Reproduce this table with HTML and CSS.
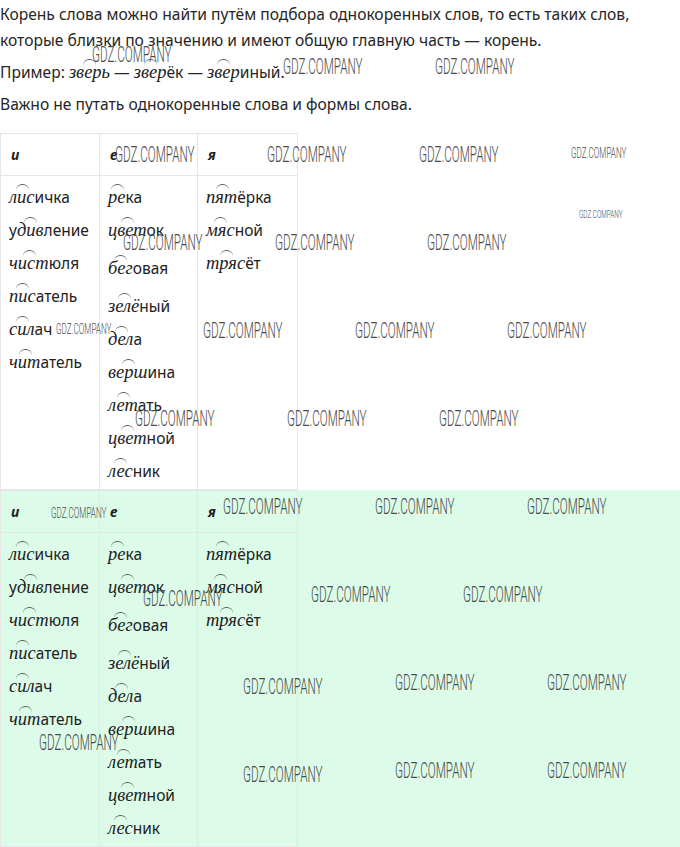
FILE: index.html
```html
<!DOCTYPE html>
<html lang="ru">
<head>
<meta charset="utf-8">
<link rel="stylesheet" href="styles.css">
</head>
<body>
<div class="page">
  <p class="intro">Корень слова можно найти путём подбора однокоренных слов, то есть таких слов,<br>которые близки по значению и имеют общую главную часть — корень.</p>
  <p class="example">Пример: <span class="r it">зверь</span> — <span class="r">звер</span>ёк — <span class="r">звер</span>иный.</p>
  <p class="note">Важно не путать однокоренные слова и формы слова.</p>

  <section class="block">
    <table class="roots">
      <tr class="head"><th>и</th><th>е</th><th>я</th></tr>
      <tr>
        <td>
          <div class="w"><span class="r">лис</span>ичка</div>
          <div class="w">у<span class="r">див</span>ление</div>
          <div class="w"><span class="r">чист</span>юля</div>
          <div class="w"><span class="r">пис</span>атель</div>
          <div class="w"><span class="r">сил</span>ач</div>
          <div class="w"><span class="r">чит</span>атель</div>
        </td>
        <td>
          <div class="w"><span class="r">ре</span>ка</div>
          <div class="w"><span class="r">цвет</span>ок</div>
          <div class="w tall"><span class="r">бег</span>овая</div>
          <div class="w tall"><span class="r">зелё</span>ный</div>
          <div class="w"><span class="r">дел</span>а</div>
          <div class="w"><span class="r">верш</span>ина</div>
          <div class="w"><span class="r">лет</span>ать</div>
          <div class="w"><span class="r">цвет</span>ной</div>
          <div class="w"><span class="r">лес</span>ник</div>
        </td>
        <td>
          <div class="w"><span class="r">пят</span>ёрка</div>
          <div class="w"><span class="r">мяс</span>ной</div>
          <div class="w"><span class="r">тряс</span>ёт</div>
        </td>
      </tr>
    </table>
  </section>

  <section class="block green">
    <table class="roots">
      <tr class="head"><th>и</th><th>е</th><th>я</th></tr>
      <tr>
        <td>
          <div class="w"><span class="r">лис</span>ичка</div>
          <div class="w">у<span class="r">див</span>ление</div>
          <div class="w"><span class="r">чист</span>юля</div>
          <div class="w"><span class="r">пис</span>атель</div>
          <div class="w"><span class="r">сил</span>ач</div>
          <div class="w"><span class="r">чит</span>атель</div>
        </td>
        <td>
          <div class="w"><span class="r">ре</span>ка</div>
          <div class="w"><span class="r">цвет</span>ок</div>
          <div class="w tall"><span class="r">бег</span>овая</div>
          <div class="w tall"><span class="r">зелё</span>ный</div>
          <div class="w"><span class="r">дел</span>а</div>
          <div class="w"><span class="r">верш</span>ина</div>
          <div class="w"><span class="r">лет</span>ать</div>
          <div class="w"><span class="r">цвет</span>ной</div>
          <div class="w"><span class="r">лес</span>ник</div>
        </td>
        <td>
          <div class="w"><span class="r">пят</span>ёрка</div>
          <div class="w"><span class="r">мяс</span>ной</div>
          <div class="w"><span class="r">тряс</span>ёт</div>
        </td>
      </tr>
    </table>
  </section>

  <div class="marks">
    <span class="wm" style="left:92px;top:44px">GDZ.COMPANY</span>
    <span class="wm" style="left:283px;top:56px">GDZ.COMPANY</span>
    <span class="wm" style="left:435px;top:56px">GDZ.COMPANY</span>
    <span class="wm" style="left:115px;top:144px">GDZ.COMPANY</span>
    <span class="wm" style="left:267px;top:144px">GDZ.COMPANY</span>
    <span class="wm" style="left:419px;top:144px">GDZ.COMPANY</span>
    <span class="wm sm" style="left:571px;top:146px">GDZ.COMPANY</span>
    <span class="wm xs" style="left:579px;top:209px">GDZ.COMPANY</span>
    <span class="wm" style="left:123px;top:232px">GDZ.COMPANY</span>
    <span class="wm" style="left:275px;top:232px">GDZ.COMPANY</span>
    <span class="wm" style="left:427px;top:232px">GDZ.COMPANY</span>
    <span class="wm sm" style="left:56px;top:322px">GDZ.COMPANY</span>
    <span class="wm" style="left:203px;top:320px">GDZ.COMPANY</span>
    <span class="wm" style="left:355px;top:320px">GDZ.COMPANY</span>
    <span class="wm" style="left:507px;top:320px">GDZ.COMPANY</span>
    <span class="wm" style="left:135px;top:408px">GDZ.COMPANY</span>
    <span class="wm" style="left:287px;top:408px">GDZ.COMPANY</span>
    <span class="wm" style="left:439px;top:408px">GDZ.COMPANY</span>
    <span class="wm sm" style="left:51px;top:506px">GDZ.COMPANY</span>
    <span class="wm" style="left:223px;top:496px">GDZ.COMPANY</span>
    <span class="wm" style="left:375px;top:496px">GDZ.COMPANY</span>
    <span class="wm" style="left:527px;top:496px">GDZ.COMPANY</span>
    <span class="wm" style="left:143px;top:588px">GDZ.COMPANY</span>
    <span class="wm" style="left:311px;top:584px">GDZ.COMPANY</span>
    <span class="wm" style="left:463px;top:584px">GDZ.COMPANY</span>
    <span class="wm" style="left:243px;top:676px">GDZ.COMPANY</span>
    <span class="wm" style="left:395px;top:672px">GDZ.COMPANY</span>
    <span class="wm" style="left:547px;top:672px">GDZ.COMPANY</span>
    <span class="wm" style="left:39px;top:732px">GDZ.COMPANY</span>
    <span class="wm" style="left:243px;top:764px">GDZ.COMPANY</span>
    <span class="wm" style="left:395px;top:760px">GDZ.COMPANY</span>
    <span class="wm" style="left:547px;top:760px">GDZ.COMPANY</span>
  </div>
</div>
</body>
</html>
```

FILE: styles.css
```css
* { box-sizing: border-box; }

html, body {
  margin: 0;
  padding: 0;
  background: #ffffff;
}

body {
  font-family: "Noto Sans", "Open Sans", sans-serif;
  font-size: 15.6px;
  color: #262626;
}

.page {
  position: relative;
  width: 680px;
  height: 847px;
  overflow: hidden;
}

.intro {
  margin: 0;
  padding-top: 1px;
  line-height: 26px;
}

.example {
  margin: 6px 0 0;
  line-height: 26px;
}

.note {
  margin: 6px 0 0;
  line-height: 26px;
}

.block {
  margin-top: 16px;
}

.block.green {
  margin-top: 0;
  background: #dcfce9;
  height: 358px;
}

.roots {
  border-collapse: collapse;
  width: 297px;
  table-layout: fixed;
}

.roots th,
.roots td {
  border: 1px solid #e6e6e6;
  text-align: left;
  vertical-align: top;
  padding: 0 0 0 8px;
}

.roots th:nth-child(1) { width: 99px; }
.roots th:nth-child(2) { width: 98px; }
.roots th:nth-child(3) { width: 100px; }

.roots .head th {
  height: 42px;
  vertical-align: middle;
  padding-left: 10px;
  font-weight: 700;
  font-style: italic;
  font-size: 14px;
  color: #1f1f1f;
}

.roots td {
  padding-top: 5px;
  padding-bottom: 1px;
}

.w {
  height: 33px;
  line-height: 33px;
  white-space: nowrap;
  font-size: 15.5px;
  color: #222;
}

.w.tall {
  height: 38px;
  line-height: 43px;
}

.r {
  position: relative;
  font-family: "Liberation Serif", "DejaVu Serif", serif;
  font-style: italic;
  font-size: 18.5px;
  color: #222;
}

.r::before {
  content: "";
  position: absolute;
  left: 50%;
  top: -3px;
  width: 13px;
  height: 5px;
  margin-left: -6px;
  border-top: 1.3px solid #555;
  border-radius: 50% 50% 0 0 / 100% 100% 0 0;
}

.example .r { font-size: 18.5px; }

.marks {
  position: absolute;
  inset: 0;
  pointer-events: none;
}

.wm {
  position: absolute;
  font-family: Roboto, "DejaVu Sans", sans-serif;
  font-weight: 300;
  font-size: 22px;
  line-height: 22px;
  color: #4a4a4a;
  white-space: nowrap;
  transform: scaleX(0.53);
  transform-origin: 0 0;
}

.wm.sm {
  font-size: 14px;
  line-height: 14px;
  transform: scaleX(0.58);
}

.wm.xs {
  font-size: 11px;
  line-height: 11px;
  transform: scaleX(0.58);
}
```
